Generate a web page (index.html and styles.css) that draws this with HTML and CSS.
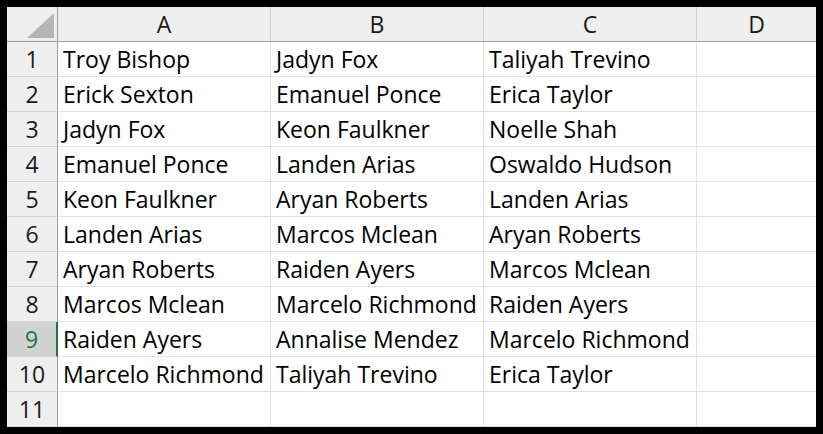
FILE: index.html
```html
<!DOCTYPE html>
<html>
<head>
<meta charset="utf-8">
<link rel="stylesheet" href="styles.css">
</head>
<body>
<div class="frame">
  <div class="sheet">
    <div class="corner"><svg width="27" height="25" viewBox="0 0 27 25"><polygon points="27,0 27,25 0,25" fill="#b5b5b5"/></svg></div>
    <div class="colhead">A</div>
    <div class="colhead">B</div>
    <div class="colhead">C</div>
    <div class="colhead last">D</div>

    <div class="rowhead">1</div><div class="cell">Troy Bishop</div><div class="cell">Jadyn Fox</div><div class="cell">Taliyah Trevino</div><div class="cell last"></div>
    <div class="rowhead">2</div><div class="cell">Erick Sexton</div><div class="cell">Emanuel Ponce</div><div class="cell">Erica Taylor</div><div class="cell last"></div>
    <div class="rowhead">3</div><div class="cell">Jadyn Fox</div><div class="cell">Keon Faulkner</div><div class="cell">Noelle Shah</div><div class="cell last"></div>
    <div class="rowhead">4</div><div class="cell">Emanuel Ponce</div><div class="cell">Landen Arias</div><div class="cell">Oswaldo Hudson</div><div class="cell last"></div>
    <div class="rowhead">5</div><div class="cell">Keon Faulkner</div><div class="cell">Aryan Roberts</div><div class="cell">Landen Arias</div><div class="cell last"></div>
    <div class="rowhead">6</div><div class="cell">Landen Arias</div><div class="cell">Marcos Mclean</div><div class="cell">Aryan Roberts</div><div class="cell last"></div>
    <div class="rowhead">7</div><div class="cell">Aryan Roberts</div><div class="cell">Raiden Ayers</div><div class="cell">Marcos Mclean</div><div class="cell last"></div>
    <div class="rowhead">8</div><div class="cell">Marcos Mclean</div><div class="cell">Marcelo Richmond</div><div class="cell">Raiden Ayers</div><div class="cell last"></div>
    <div class="rowhead selected">9</div><div class="cell">Raiden Ayers</div><div class="cell">Annalise Mendez</div><div class="cell">Marcelo Richmond</div><div class="cell last"></div>
    <div class="rowhead">10</div><div class="cell">Marcelo Richmond</div><div class="cell">Taliyah Trevino</div><div class="cell">Erica Taylor</div><div class="cell last"></div>
    <div class="rowhead">11</div><div class="cell"></div><div class="cell"></div><div class="cell"></div><div class="cell last"></div>
  </div>
</div>
</body>
</html>
```
FILE: styles.css
```css
html, body {
  margin: 0;
  padding: 0;
  background: #000;
}
.frame {
  width: 823px;
  height: 434px;
  box-sizing: border-box;
  padding: 7px 7px 8px 7px;
  background: #000;
  overflow: hidden;
}
.sheet {
  display: grid;
  grid-template-columns: 51px 213px 213px 213px 1fr;
  grid-auto-rows: 35px;
  background: #fff;
  height: 100%;
  font-family: "Open Sans", "Noto Sans", sans-serif;
  font-size: 23px;
  color: #000;
}
.sheet > div {
  box-sizing: border-box;
  border-right: 1px solid #e1e1e1;
  border-bottom: 1px solid #e1e1e1;
  display: flex;
  align-items: center;
  white-space: nowrap;
  overflow: visible;
}
.corner {
  background: #efefef;
  justify-content: flex-end;
  align-items: flex-end !important;
  padding: 0 3px 3px 0;
  border-right-color: #9e9e9e !important;
  border-bottom-color: #9e9e9e !important;
}
.corner svg { display: block; }
.colhead {
  background: #efefef;
  justify-content: center;
  border-right-color: #d0d0d0 !important;
  border-bottom-color: #9e9e9e !important;
  color: #1a1a1a;
}
.rowhead {
  background: #efefef;
  justify-content: center;
  border-right-color: #9e9e9e !important;
  border-bottom-color: #d4d4d4 !important;
  color: #1a1a1a;
}
.rowhead.selected {
  background: #d2d2d2;
  color: #217346;
  border-right: 2px solid #217346 !important;
}
.cell {
  padding-left: 5px;
}
.last {
  border-right: none !important;
}
```
